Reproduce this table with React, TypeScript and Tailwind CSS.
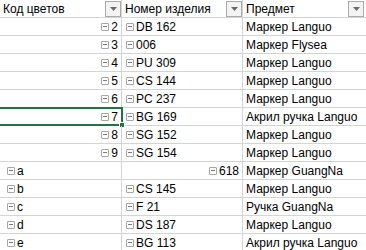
const font = { fontFamily: '"Liberation Sans", Arial, sans-serif' };

type Row = {
  code: string;
  codeLevel: 'num' | 'letter';
  item: string;
  itemRight?: boolean;
  subject: string;
  selected?: boolean;
};

const rows: Row[] = [
  { code: '2', codeLevel: 'num', item: 'DB 162', subject: 'Маркер Languo' },
  { code: '3', codeLevel: 'num', item: '006', subject: 'Маркер Flysea' },
  { code: '4', codeLevel: 'num', item: 'PU 309', subject: 'Маркер Languo' },
  { code: '5', codeLevel: 'num', item: 'CS 144', subject: 'Маркер Languo' },
  { code: '6', codeLevel: 'num', item: 'PC 237', subject: 'Маркер Languo' },
  { code: '7', codeLevel: 'num', item: 'BG 169', subject: 'Акрил ручка Languo', selected: true },
  { code: '8', codeLevel: 'num', item: 'SG 152', subject: 'Маркер Languo' },
  { code: '9', codeLevel: 'num', item: 'SG 154', subject: 'Маркер Languo' },
  { code: 'a', codeLevel: 'letter', item: '618', itemRight: true, subject: 'Маркер GuangNa' },
  { code: 'b', codeLevel: 'letter', item: 'CS 145', subject: 'Маркер Languo' },
  { code: 'c', codeLevel: 'letter', item: 'F 21', subject: 'Ручка GuangNa' },
  { code: 'd', codeLevel: 'letter', item: 'DS 187', subject: 'Маркер Languo' },
  { code: 'e', codeLevel: 'letter', item: 'BG 113', subject: 'Акрил ручка Languo' },
];

const Collapse = () => (
  <span className="inline-flex items-center justify-center w-[8px] h-[8px] border border-[#a6a6a6] rounded-[1px] mr-[2px] shrink-0">
    <span className="block w-[4px] h-px bg-[#7a7a7a]" />
  </span>
);

const Dropdown = () => (
  <span className="flex items-center justify-center w-[16px] h-[16px] border border-[#ababab] bg-[#f3f3f3] shrink-0">
    <svg width="7" height="4" viewBox="0 0 7 4">
      <path d="M0 0h7L3.5 4z" fill="#6a6a6a" />
    </svg>
  </span>
);

export default function App() {
  return (
    <div className="w-[366px] h-[250px] overflow-hidden bg-white text-[12px] text-black leading-none whitespace-nowrap" style={font}>
      <div className="grid grid-cols-[122px_121px_1fr]">
        {/* header */}
        <div className="h-[18px] flex items-center justify-between pl-[3px] border-b border-r border-[#d4d4d4]">
          <span>Код цветов</span>
          <Dropdown />
        </div>
        <div className="h-[18px] flex items-center justify-between pl-[3px] border-b border-r border-[#d4d4d4]">
          <span>Номер изделия</span>
          <Dropdown />
        </div>
        <div className="h-[18px] flex items-center justify-between pl-[3px] pr-[2px] border-b border-[#d4d4d4]">
          <span>Предмет</span>
          <Dropdown />
        </div>

        {rows.map((r) => (
          <div key={r.code} className="contents">
            <div
              className={
                'relative h-[18px] flex items-center border-b border-r border-[#d4d4d4] ' +
                (r.codeLevel === 'num' ? 'justify-end pr-[3px]' : 'pl-[7px]')
              }
            >
              <Collapse />
              <span>{r.code}</span>
              {r.selected && (
                <>
                  <span className="absolute -left-[2px] -top-[1px] -right-[2px] -bottom-[1px] border-2 border-[#217346]" />
                  <span className="absolute -right-[4px] -bottom-[3px] w-[6px] h-[6px] bg-[#217346] border border-white" />
                </>
              )}
            </div>
            <div
              className={
                'h-[18px] flex items-center border-b border-r border-[#d4d4d4] ' +
                (r.itemRight ? 'justify-end pr-[3px]' : 'pl-[4px]')
              }
            >
              <Collapse />
              <span>{r.item}</span>
            </div>
            <div className="h-[18px] flex items-center pl-[3px] border-b border-[#d4d4d4]">
              <span>{r.subject}</span>
            </div>
          </div>
        ))}
      </div>
    </div>
  );
}
